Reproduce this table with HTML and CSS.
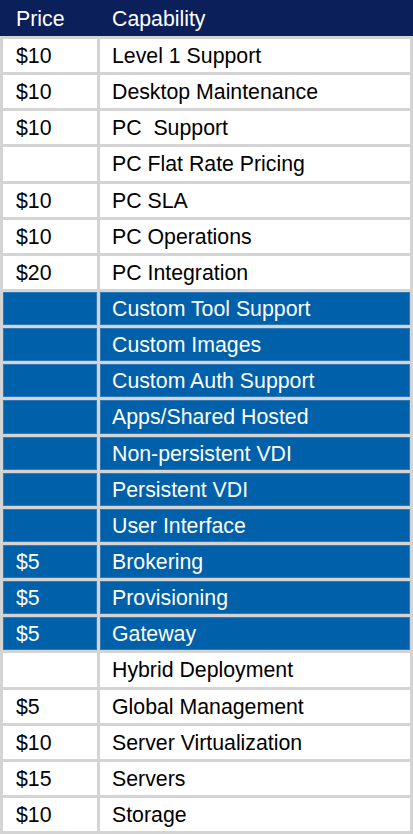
FILE: index.html
```html
<!DOCTYPE html>
<html>
<head>
<meta charset="utf-8">
<link rel="stylesheet" href="styles.css">
</head>
<body>
<div class="table">
  <div class="head">
    <div class="hcell price">Price</div>
    <div class="hcell cap">Capability</div>
  </div>
  <div class="body">
    <div class="cell price">$10</div><div class="cell cap">Level 1 Support</div>
    <div class="cell price">$10</div><div class="cell cap">Desktop Maintenance</div>
    <div class="cell price">$10</div><div class="cell cap">PC&nbsp; Support</div>
    <div class="cell price"></div><div class="cell cap">PC Flat Rate Pricing</div>
    <div class="cell price">$10</div><div class="cell cap">PC SLA</div>
    <div class="cell price">$10</div><div class="cell cap">PC Operations</div>
    <div class="cell price">$20</div><div class="cell cap">PC Integration</div>
    <div class="cell price blue"></div><div class="cell cap blue">Custom Tool Support</div>
    <div class="cell price blue"></div><div class="cell cap blue">Custom Images</div>
    <div class="cell price blue"></div><div class="cell cap blue">Custom Auth Support</div>
    <div class="cell price blue"></div><div class="cell cap blue">Apps/Shared Hosted</div>
    <div class="cell price blue"></div><div class="cell cap blue">Non-persistent VDI</div>
    <div class="cell price blue"></div><div class="cell cap blue">Persistent VDI</div>
    <div class="cell price blue"></div><div class="cell cap blue">User Interface</div>
    <div class="cell price blue">$5</div><div class="cell cap blue">Brokering</div>
    <div class="cell price blue">$5</div><div class="cell cap blue">Provisioning</div>
    <div class="cell price blue">$5</div><div class="cell cap blue">Gateway</div>
    <div class="cell price"></div><div class="cell cap">Hybrid Deployment</div>
    <div class="cell price">$5</div><div class="cell cap">Global Management</div>
    <div class="cell price">$10</div><div class="cell cap">Server Virtualization</div>
    <div class="cell price">$15</div><div class="cell cap">Servers</div>
    <div class="cell price">$10</div><div class="cell cap">Storage</div>
  </div>
</div>
</body>
</html>
```
FILE: styles.css
```css
html, body {
  margin: 0;
  padding: 0;
  background: #ffffff;
}
.table {
  width: 413px;
  background: #d4d4d4;
  font-family: "Liberation Sans", Arial, sans-serif;
  font-size: 21.3px;
}
.head {
  height: 36px;
  box-sizing: border-box;
  padding-top: 3px;
  background: #0b1f5a;
  display: grid;
  grid-template-columns: 97px 1fr;
  align-items: center;
  color: #ffffff;
}
.hcell.price {
  padding-left: 16px;
}
.hcell.cap {
  padding-left: 15px;
}
.body {
  display: grid;
  grid-template-columns: 94px 310px;
  grid-auto-rows: 33.15px;
  gap: 3px;
  padding: 3px;
}
.cell {
  box-sizing: border-box;
  padding-top: 2px;
  background: #ffffff;
  color: #000000;
  display: flex;
  align-items: center;
  white-space: nowrap;
}
.cell.price {
  padding-left: 13px;
}
.cell.cap {
  padding-left: 12px;
}
.cell.blue {
  background: #0060a9;
  color: #ffffff;
  box-shadow: inset 0 0 0 1px #2f78bb;
}
```
